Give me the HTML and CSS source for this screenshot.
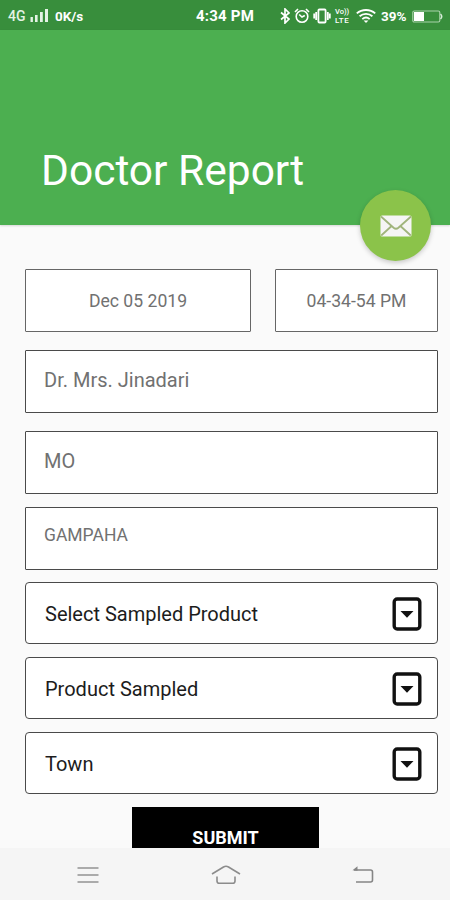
FILE: index.html
```
<!DOCTYPE html>
<html lang="en">
<head>
  <meta charset="UTF-8">
  <title>Doctor Report</title>
  <link rel="stylesheet" href="styles.css">
</head>
<body>
  <!-- status bar -->
  <div class="status">
    <div class="status-left">
      <span class="network">4G</span>
      <svg class="signal" width="19" height="15" viewBox="0 0 19 15" fill="#e4f3e5">
        <rect x="0.5" y="9" width="2.4" height="5"/>
        <rect x="5" y="7" width="2.6" height="7"/>
        <rect x="10" y="4" width="2.8" height="10"/>
        <rect x="15" y="1" width="3" height="13"/>
      </svg>
      <span class="speed">0K/s</span>
    </div>
    <span class="clock">4:34 PM</span>
    <div class="status-right">
      <svg width="10" height="16" viewBox="0 0 10 16" fill="none" stroke="#fff" stroke-width="1.7">
        <path d="M1 4.5l8 6.5-4 4V1l4 4-8 6.5"/>
      </svg>
      <svg class="alarm" width="16" height="16" viewBox="0 0 16 16" fill="none" stroke="#fff" stroke-width="1.6">
        <circle cx="8" cy="8.5" r="5.8"/>
        <path d="M1 4l3-3M15 4l-3-3M5.2 6.5L8 9l2.8-1.5"/>
      </svg>
      <svg class="vibrate" width="18" height="16" viewBox="0 0 18 16" fill="none" stroke="#fff" stroke-width="1.8">
        <rect x="5.4" y="1.5" width="7.2" height="13" rx="1"/>
        <path d="M3.2 4v8M1.2 5.5v5M14.8 4v8M16.8 5.5v5"/>
      </svg>
      <span class="volte"><span class="vo">Vo))</span><span class="lte">LTE</span></span>
      <svg class="wifi" width="20" height="16" viewBox="0 0 20 16" fill="none" stroke="#fff" stroke-width="1.9">
        <path d="M.8 5.4c5.2-4.6 13.2-4.6 18.4 0M3.6 8.3c3.7-3.2 9.1-3.2 12.8 0M6.3 11.1c2.2-1.9 5.2-1.9 7.4 0"/>
        <path d="M7.6 12.4h4.8L10 15z" fill="#fff" stroke="none"/>
      </svg>
      <span class="percent">39%</span>
      <svg class="battery" width="31" height="13" viewBox="0 0 31 13">
        <rect x=".8" y="1" width="27" height="11" rx="1.5" fill="none" stroke="#a7d1a9" stroke-width="1.2"/>
        <rect x="2" y="2" width="10" height="9" fill="#fff"/>
        <path d="M28.5 4q2.5 2.5 0 5" fill="none" stroke="#d8ecd9" stroke-width="1.4"/>
      </svg>
    </div>
  </div>

  <!-- header -->
  <div class="header">
    <h1>Doctor Report</h1>
    <button class="mail">
      <svg width="32" height="22" viewBox="0 0 32 22">
        <rect x=".5" y=".5" width="31" height="21" rx="1.5" fill="#f5f5f5"/>
        <path d="M1 1.5l12.6 11.2q2.4 2 4.8 0L31 1.5M1.2 20.5L11.6 11M30.8 20.5L20.4 11" fill="none" stroke="#a0b47c" stroke-width="1.8"/>
      </svg>
    </button>
  </div>

  <!-- form -->
  <div class="form">
    <div class="when">
      <div class="box date">Dec 05 2019</div>
      <div class="box time">04-34-54 PM</div>
    </div>
    <div class="box field doctor">Dr. Mrs. Jinadari</div>
    <div class="box field post">MO</div>
    <div class="box field area">GAMPAHA</div>
    <div class="box select">
      <span>Select Sampled Product</span>
      <svg width="30" height="34" viewBox="0 0 30 34"><rect x="2.2" y="2" width="25.6" height="30" rx="3" fill="#fff" stroke="#111" stroke-width="3.4"/><path d="M8.5 14h13L15 20.8z" fill="#111"/></svg>
    </div>
    <div class="box select">
      <span>Product Sampled</span>
      <svg width="30" height="34" viewBox="0 0 30 34"><rect x="2.2" y="2" width="25.6" height="30" rx="3" fill="#fff" stroke="#111" stroke-width="3.4"/><path d="M8.5 14h13L15 20.8z" fill="#111"/></svg>
    </div>
    <div class="box select">
      <span>Town</span>
      <svg width="30" height="34" viewBox="0 0 30 34"><rect x="2.2" y="2" width="25.6" height="30" rx="3" fill="#fff" stroke="#111" stroke-width="3.4"/><path d="M8.5 14h13L15 20.8z" fill="#111"/></svg>
    </div>
    <button class="submit">SUBMIT</button>
  </div>

  <!-- navigation bar -->
  <div class="nav">
    <svg width="22" height="18" viewBox="0 0 22 18" fill="none" stroke="#929292" stroke-width="1.7">
      <path d="M.5 2h21M.5 9h21M.5 16h21"/>
    </svg>
    <svg class="home" width="30" height="20" viewBox="0 0 30 20" fill="none" stroke="#8c8c8c" stroke-width="1.6">
      <path d="M1 9L12.5 2q2.5-1.4 5 0L29 9M6 11.5V16q0 2.3 2.3 2.3h13.4q2.3 0 2.3-2.3v-4.5"/>
    </svg>
    <svg class="back" width="22" height="18" viewBox="0 0 22 18" fill="none" stroke="#858585" stroke-width="1.6">
      <path d="M2 4h16.5q2 0 2 2v8q0 2-2 2H4"/>
      <path d="M.5 4.2L5.5 .3v4.5z" fill="#858585" stroke="none"/>
    </svg>
  </div>
</body>
</html>
```

FILE: styles.css
```
* {
  box-sizing: border-box;
}
body {
  margin: 0;
  height: 900px;
  overflow: hidden;
  display: flex;
  flex-direction: column;
  font-family: Roboto, sans-serif;
  background-color: #fafafa;
}
svg {
  display: block;
  flex: none;
}
button {
  border: none;
  padding: 0;
  font-family: inherit;
}
.status {
  flex: none;
  height: 30px;
  padding: 2px 7px 0 8px;
  display: grid;
  grid-template-columns: 188px 59px 1fr;
  align-items: center;
  background-color: #388e3c;
  color: white;
  white-space: nowrap;
}
.status-left, .status-right {
  display: flex;
  align-items: center;
}
.status-right {
  justify-content: flex-end;
}
.network {
  width: 22px;
  font-size: 14px;
  font-weight: 500;
  color: #e4f3e5;
}
.signal {
  margin-top: -1px;
}
.speed {
  margin-left: 6px;
  font-size: 13.5px;
  font-weight: 700;
}
.clock {
  font-size: 15px;
  font-weight: 700;
  letter-spacing: 0.2px;
}
.alarm {
  margin-left: 4px;
}
.vibrate {
  margin-left: 3px;
}
.volte {
  display: flex;
  flex-direction: column;
  width: 17px;
  margin-left: 4px;
  font-weight: 500;
  line-height: 9px;
}
.vo {
  font-size: 7.5px;
}
.lte {
  font-size: 8px;
  letter-spacing: 0.5px;
}
.wifi {
  margin-left: 4px;
}
.percent {
  width: 27px;
  margin-left: 5px;
  font-size: 13.5px;
  font-weight: 700;
}
.battery {
  margin-left: 4px;
}
.header {
  flex: none;
  position: relative;
  height: 195px;
  padding: 116px 0 0 41px;
  background-color: #4caf50;
  box-shadow: 0 1px 2px rgba(0,0,0,0.15);
}
h1 {
  margin: 0;
  font-size: 42.5px;
  font-weight: 400;
  line-height: 50px;
  color: white;
}
.mail {
  position: absolute;
  right: 19px;
  bottom: -36px;
  width: 71px;
  height: 71px;
  display: flex;
  align-items: center;
  justify-content: center;
  border-radius: 50%;
  background-color: #8bc34a;
  box-shadow: 0 2px 5px rgba(0,0,0,0.2);
}
.form {
  flex: none;
  height: 623px;
  padding: 44px 12px 0 25px;
  display: flex;
  flex-direction: column;
  overflow: hidden;
}
.when {
  display: grid;
  grid-template-columns: 226px 163px;
  gap: 24px;
  margin-bottom: 18px;
}
.box {
  flex: none;
  height: 63px;
  border: 1.5px solid #4a4a4a;
  border-radius: 1px;
  background-color: white;
  color: #717171;
}
.date, .time {
  display: flex;
  align-items: center;
  justify-content: center;
  padding-top: 1px;
  font-size: 17.6px;
  border-color: #666;
}
.field {
  padding-left: 18px;
  font-size: 20px;
  line-height: 58px;
}
.doctor {
  margin-bottom: 18px;
}
.post {
  margin-bottom: 13px;
}
.area {
  margin-bottom: 12px;
  font-size: 17.5px;
  line-height: 54px;
}
.select {
  display: flex;
  align-items: center;
  justify-content: space-between;
  height: 62px;
  margin-bottom: 13px;
  padding: 1px 15px 0 19px;
  border-radius: 4px;
  font-size: 20px;
  color: #1c1c1c;
}
.submit {
  flex: none;
  width: 187px;
  height: 60px;
  margin-left: 107px;
  background-color: black;
  color: white;
  font-size: 18px;
  font-weight: 700;
}
.nav {
  flex: none;
  height: 52px;
  display: flex;
  align-items: center;
  padding: 2px 0 0 77px;
  background-color: #f5f5f5;
}
.home {
  margin-left: 112px;
}
.back {
  margin-left: 111px;
}
```
